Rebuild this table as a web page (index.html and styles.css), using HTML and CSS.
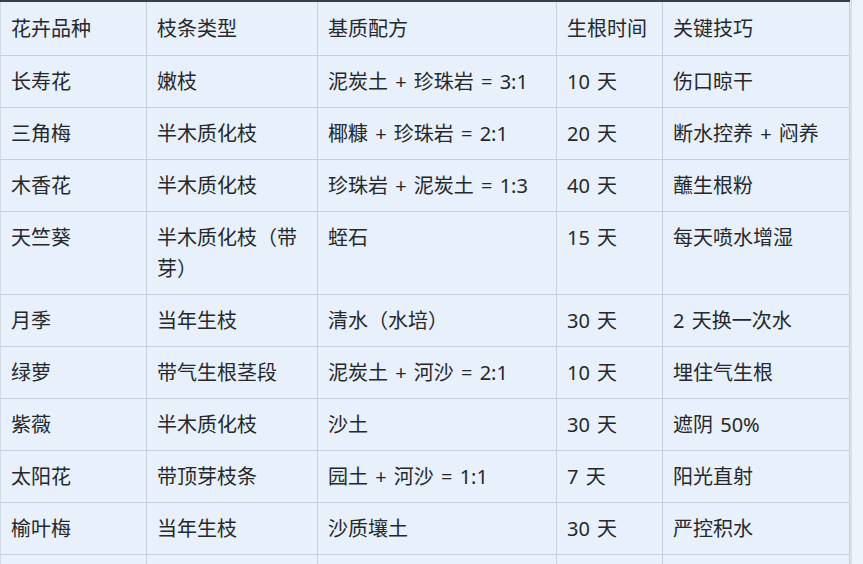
FILE: index.html
```html
<!DOCTYPE html>
<html lang="zh-CN">
<head>
<meta charset="utf-8">
<title>扦插表</title>
<link rel="stylesheet" href="styles.css">
</head>
<body>
<div class="page">
  <table class="grid">
    <thead>
      <tr>
        <th class="c1">花卉品种</th>
        <th class="c2">枝条类型</th>
        <th class="c3">基质配方</th>
        <th class="c4">生根时间</th>
        <th class="c5">关键技巧</th>
      </tr>
    </thead>
    <tbody>
      <tr><td>长寿花</td><td>嫩枝</td><td>泥炭土 + 珍珠岩 = 3:1</td><td>10 天</td><td>伤口晾干</td></tr>
      <tr><td>三角梅</td><td>半木质化枝</td><td>椰糠 + 珍珠岩 = 2:1</td><td>20 天</td><td>断水控养 + 闷养</td></tr>
      <tr><td>木香花</td><td>半木质化枝</td><td>珍珠岩 + 泥炭土 = 1:3</td><td>40 天</td><td>蘸生根粉</td></tr>
      <tr><td>天竺葵</td><td>半木质化枝（带芽）</td><td>蛭石</td><td>15 天</td><td>每天喷水增湿</td></tr>
      <tr><td>月季</td><td>当年生枝</td><td>清水（水培）</td><td>30 天</td><td>2 天换一次水</td></tr>
      <tr><td>绿萝</td><td>带气生根茎段</td><td>泥炭土 + 河沙 = 2:1</td><td>10 天</td><td>埋住气生根</td></tr>
      <tr><td>紫薇</td><td>半木质化枝</td><td>沙土</td><td>30 天</td><td>遮阴 50%</td></tr>
      <tr><td>太阳花</td><td>带顶芽枝条</td><td>园土 + 河沙 = 1:1</td><td>7 天</td><td>阳光直射</td></tr>
      <tr><td>榆叶梅</td><td>当年生枝</td><td>沙质壤土</td><td>30 天</td><td>严控积水</td></tr>
      <tr><td>&nbsp;</td><td>&nbsp;</td><td>&nbsp;</td><td>&nbsp;</td><td>&nbsp;</td></tr>
    </tbody>
  </table>
</div>
</body>
</html>
```

FILE: styles.css
```css
html, body {
  margin: 0;
  padding: 0;
}

body {
  background: #eef4fc;
  width: 863px;
  height: 564px;
  overflow: hidden;
  font-family: "Noto Sans", "Noto Sans CJK SC", sans-serif;
  color: #26282c;
}

.page {
  width: 850px;
  border-top: 2px solid #3b3e45;
  box-shadow: 1px 0 0 #dde5ef, 2px 0 0 #d3dce8;
}

.grid {
  width: 850px;
  table-layout: fixed;
  border-collapse: separate;
  border-spacing: 0;
  background: #e7f0fb;
}

.grid th,
.grid td {
  box-sizing: border-box;
  font-size: 20px;
  font-weight: normal;
  line-height: 31px;
  word-spacing: 2px;
  text-align: left;
  vertical-align: top;
  padding: 10px 10px 10px 10px;
  border-right: 1px solid #c6d0dd;
  border-bottom: 1px solid #c6d0dd;
}

.grid th {
  padding-top: 11px;
  padding-bottom: 11px;
}

.grid th:first-child,
.grid td:first-child {
  border-left: 1px solid #d2dae5;
}

.c1 { width: 147px; }
.c2 { width: 171px; }
.c3 { width: 239px; }
.c4 { width: 106px; }
.c5 { width: 187px; }
```
